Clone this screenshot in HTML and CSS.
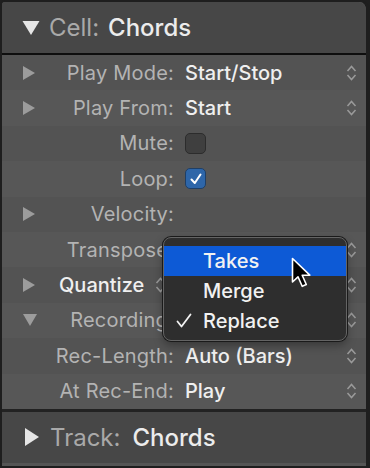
FILE: index.html
```html
<!DOCTYPE html>
<html>
<head>
<meta charset="utf-8">
<link rel="stylesheet" href="styles.css">
</head>
<body>
<div class="panel">
  <div class="header">
    <svg class="tri-down-lg" width="18" height="16" viewBox="0 0 18 16"><path d="M0.5 1 H17.5 L9 15 Z" fill="#e6e6e6"/></svg>
    <span class="h-label">Cell:</span><span class="h-value">Chords</span>
  </div>
  <div class="rows">
    <div class="row odd">
      <span class="disc"><svg width="14" height="16" viewBox="0 0 14 16"><path d="M1 1 L13 8 L1 15 Z" fill="#9c9c9c"/></svg></span>
      <span class="label">Play Mode:</span><span class="value">Start/Stop</span>
      <span class="step"><svg width="11" height="18" viewBox="0 0 11 18"><path d="M1.5 7 L5.5 2.5 L9.5 7 M1.5 11 L5.5 15.5 L9.5 11" fill="none" stroke="#9a9a9a" stroke-width="1.5"/></svg></span>
    </div>
    <div class="row even">
      <span class="disc"><svg width="14" height="16" viewBox="0 0 14 16"><path d="M1 1 L13 8 L1 15 Z" fill="#9c9c9c"/></svg></span>
      <span class="label">Play From:</span><span class="value">Start</span>
      <span class="step"><svg width="11" height="18" viewBox="0 0 11 18"><path d="M1.5 7 L5.5 2.5 L9.5 7 M1.5 11 L5.5 15.5 L9.5 11" fill="none" stroke="#9a9a9a" stroke-width="1.5"/></svg></span>
    </div>
    <div class="row odd">
      <span class="disc"></span>
      <span class="label">Mute:</span><span class="value"><span class="check"></span></span>
      <span class="step"></span>
    </div>
    <div class="row even">
      <span class="disc"></span>
      <span class="label">Loop:</span><span class="value"><span class="check on"><svg width="14" height="14" viewBox="0 0 14 14"><path d="M2.5 7.5 L5.8 11 L11.5 2.5" fill="none" stroke="#ffffff" stroke-width="2" stroke-linecap="round" stroke-linejoin="round"/></svg></span></span>
      <span class="step"></span>
    </div>
    <div class="row odd">
      <span class="disc"><svg width="14" height="16" viewBox="0 0 14 16"><path d="M1 1 L13 8 L1 15 Z" fill="#9c9c9c"/></svg></span>
      <span class="label">Velocity:</span><span class="value"></span>
      <span class="step"></span>
    </div>
    <div class="row even">
      <span class="disc"></span>
      <span class="label">Transpose:</span><span class="value"></span>
      <span class="step"><svg width="11" height="18" viewBox="0 0 11 18"><path d="M1.5 7 L5.5 2.5 L9.5 7 M1.5 11 L5.5 15.5 L9.5 11" fill="none" stroke="#9a9a9a" stroke-width="1.5"/></svg></span>
    </div>
    <div class="row odd">
      <span class="disc"><svg width="14" height="16" viewBox="0 0 14 16"><path d="M1 1 L13 8 L1 15 Z" fill="#9c9c9c"/></svg></span>
      <span class="label quant">Quantize<svg width="11" height="18" viewBox="0 0 11 18"><path d="M1.5 7 L5.5 2.5 L9.5 7 M1.5 11 L5.5 15.5 L9.5 11" fill="none" stroke="#9a9a9a" stroke-width="1.5"/></svg></span><span class="value"></span>
      <span class="step"><svg width="11" height="18" viewBox="0 0 11 18"><path d="M1.5 7 L5.5 2.5 L9.5 7 M1.5 11 L5.5 15.5 L9.5 11" fill="none" stroke="#9a9a9a" stroke-width="1.5"/></svg></span>
    </div>
    <div class="row even">
      <span class="disc"><svg width="16" height="14" viewBox="0 0 16 14"><path d="M1 1 H15 L8 13 Z" fill="#9c9c9c"/></svg></span>
      <span class="label">Recording:</span><span class="value"></span>
      <span class="step"><svg width="11" height="18" viewBox="0 0 11 18"><path d="M1.5 7 L5.5 2.5 L9.5 7 M1.5 11 L5.5 15.5 L9.5 11" fill="none" stroke="#9a9a9a" stroke-width="1.5"/></svg></span>
    </div>
    <div class="row odd">
      <span class="disc"></span>
      <span class="label">Rec-Length:</span><span class="value">Auto (Bars)</span>
      <span class="step"><svg width="11" height="18" viewBox="0 0 11 18"><path d="M1.5 7 L5.5 2.5 L9.5 7 M1.5 11 L5.5 15.5 L9.5 11" fill="none" stroke="#9a9a9a" stroke-width="1.5"/></svg></span>
    </div>
    <div class="row even">
      <span class="disc"></span>
      <span class="label">At Rec-End:</span><span class="value">Play</span>
      <span class="step"><svg width="11" height="18" viewBox="0 0 11 18"><path d="M1.5 7 L5.5 2.5 L9.5 7 M1.5 11 L5.5 15.5 L9.5 11" fill="none" stroke="#9a9a9a" stroke-width="1.5"/></svg></span>
    </div>
  </div>
  <div class="footer">
    <svg class="tri-right-lg" width="16" height="20" viewBox="0 0 16 20"><path d="M1 1 L15 10 L1 19 Z" fill="#e6e6e6"/></svg>
    <span class="h-label">Track:</span><span class="h-value">Chords</span>
  </div>

  <div class="menu">
    <div class="item sel"><span class="mark"></span>Takes</div>
    <div class="item"><span class="mark"></span>Merge</div>
    <div class="item"><span class="mark"><svg width="16" height="16" viewBox="0 0 16 16"><path d="M1.5 8.5 L5.5 13.5 L14.5 1.5" fill="none" stroke="#f2f2f2" stroke-width="1.8" stroke-linecap="round" stroke-linejoin="round"/></svg></span>Replace</div>
  </div>
  <svg class="cursor" width="24" height="32" viewBox="0 0 24 32"><path d="M1.5 1.5 L1.5 25 L7 19.8 L11.2 29.3 L15.3 27.5 L11.2 18.2 L18.8 18.2 Z" fill="#000" stroke="#fff" stroke-width="1.6" stroke-linejoin="round"/></svg>
</div>
</body>
</html>
```
FILE: styles.css
```css
* { box-sizing: border-box; }
html, body { margin: 0; padding: 0; background: #1f1f1f; }
body { width: 370px; height: 468px; overflow: hidden; font-family: "Inter", "Roboto", sans-serif; }
.panel {
  position: relative;
  width: 370px;
  height: 468px;
  border: 2px solid #1e1e1e;
  border-right-width: 4px;
  border-radius: 5px 10px 0 0;
  background: #555555;
  display: flex;
  flex-direction: column;
}
.header, .footer {
  display: flex;
  align-items: center;
  background: #474747;
  padding-left: 20px;
  font-size: 24px;
}
.header {
  height: 53px;
  border-bottom: 2px solid #0e0e0e;
  border-radius: 3px 8px 0 0;
}
.footer {
  height: 54px;
  border-top: 3px solid #222222;
  padding-left: 22px;
}
.tri-down-lg { margin-right: 9px; margin-top: 1px; }
.tri-right-lg { margin-right: 10px; }
.h-label { color: #a9a9a9; margin-right: 9px; }
.h-value { color: #ececec; font-weight: 500; }
.footer .h-label { margin-right: 12px; }
.rows { display: flex; flex-direction: column; }
.row {
  height: 35.4px;
  display: grid;
  grid-template-columns: 48px 124px 1fr 24px;
  padding-right: 3px;
  align-items: center;
  font-size: 20px;
}
.row.odd { background: #535353; }
.row.even { background: #575757; }
.disc { display: flex; align-items: center; padding-left: 20px; }
.label { color: #b3b3b3; text-align: right; white-space: nowrap; letter-spacing: 0.2px; }
.label.quant {
  color: #efefef;
  font-weight: 500;
  text-align: left;
  padding-left: 9px;
  display: flex;
  align-items: center;
  gap: 11px;
  letter-spacing: 0;
}
.value { color: #efefef; font-weight: 500; padding-left: 11px; display: flex; align-items: center; }
.step { display: flex; align-items: center; justify-content: center; }
.check {
  width: 21px; height: 21px;
  border-radius: 5px;
  background: #3f3f3f;
  border: 1px solid #2c2c2c;
  display: flex; align-items: center; justify-content: center;
}
.check.on { background: #2e66a9; border-color: #1f3f66; }
.menu {
  position: absolute;
  left: 161px;
  top: 235px;
  width: 184px;
  height: 104px;
  background: #2e2e2e;
  border: 1px solid #646464;
  box-shadow: 0 0 0 1px #1a1a1a, 0 4px 10px rgba(0,0,0,0.35);
  border-radius: 8px;
  padding: 8px 0 4px;
  font-size: 20px;
  font-weight: 500;
  color: #f2f2f2;
}
.item { height: 30px; display: flex; align-items: center; }
.item.sel { background: #0d5ad6; }
.mark { width: 39px; display: flex; justify-content: flex-end; padding-right: 11px; }
.cursor { position: absolute; left: 289px; top: 255px; }
```
